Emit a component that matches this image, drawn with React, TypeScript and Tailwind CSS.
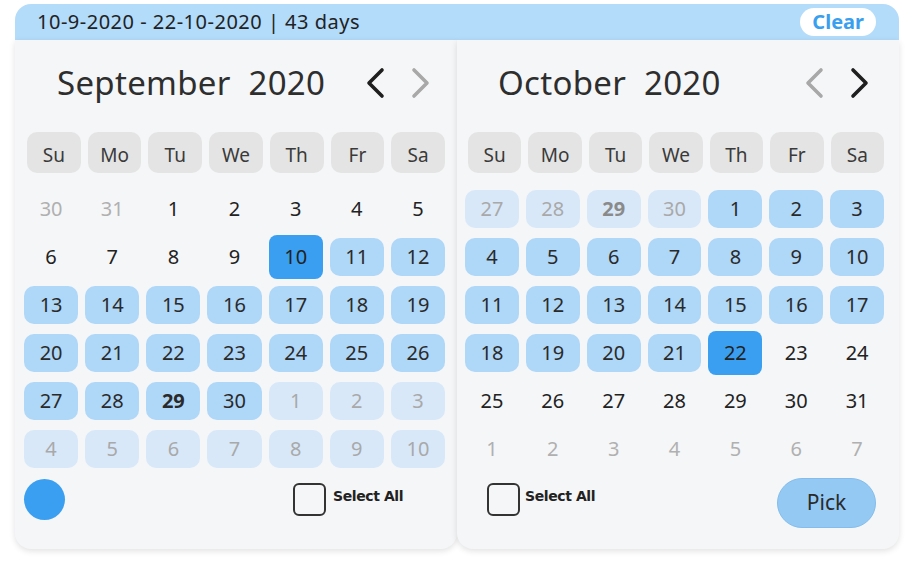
import React from "react";

type Day = { n: number; kind: "out" | "in" | "range" | "outRange" | "end"; bold?: boolean };

const WEEK = ["Su", "Mo", "Tu", "We", "Th", "Fr", "Sa"];

function septDays(): Day[] {
  const d: Day[] = [{ n: 30, kind: "out" }, { n: 31, kind: "out" }];
  for (let i = 1; i <= 30; i++) {
    d.push({ n: i, kind: i < 10 ? "in" : i === 10 ? "end" : "range", bold: i === 29 });
  }
  for (let i = 1; i <= 10; i++) d.push({ n: i, kind: "outRange" });
  return d;
}

function octDays(): Day[] {
  const d: Day[] = [27, 28, 29, 30].map((n) => ({ n, kind: "outRange" as const, bold: n === 29 }));
  for (let i = 1; i <= 31; i++) {
    d.push({ n: i, kind: i < 22 ? "range" : i === 22 ? "end" : "in" });
  }
  for (let i = 1; i <= 7; i++) d.push({ n: i, kind: "out" });
  return d;
}

function Chevron({ dir, dark }: { dir: "left" | "right"; dark: boolean }) {
  return (
    <svg width="22" height="32" viewBox="0 0 22 32" fill="none">
      <polyline
        points={dir === "left" ? "17,3 4,16 17,29" : "5,3 18,16 5,29"}
        stroke={dark ? "#1f1f1f" : "#a8a8a8"}
        strokeWidth="3.6"
        strokeLinecap="round"
        strokeLinejoin="round"
      />
    </svg>
  );
}

function DayCell({ d }: { d: Day }) {
  const base = "flex items-center justify-center text-[20px] leading-none";
  if (d.kind === "end")
    return <div className={`${base} h-[44px] -my-[3px] rounded-[8px] bg-[#3a9ff0] text-[#222]`}>{d.n}</div>;
  if (d.kind === "range")
    return (
      <div className={`${base} h-[38px] rounded-[10px] bg-[#afd7f8] text-[#2a2a2a] ${d.bold ? "font-bold" : ""}`}>
        {d.n}
      </div>
    );
  if (d.kind === "outRange")
    return (
      <div
        className={`${base} h-[38px] rounded-[10px] bg-[#d8e8f8] ${d.bold ? "font-bold text-[#8a8a8a]" : "text-[#a9a9a9]"}`}
      >
        {d.n}
      </div>
    );
  if (d.kind === "out") return <div className={`${base} h-[38px] text-[#b0b0b0]`}>{d.n}</div>;
  return <div className={`${base} h-[38px] text-[#222]`}>{d.n}</div>;
}

function Month({
  title,
  days,
  leftDark,
  side,
}: {
  title: string;
  days: Day[];
  leftDark: boolean;
  side: "left" | "right";
}) {
  return (
    <div
      className={`w-[442px] h-[509px] bg-[#f5f6f8] rounded-b-[16px] shadow-[0_2px_6px_rgba(0,0,0,0.12)] pt-[22px] ${
        side === "left" ? "pl-[9px] pr-[12px]" : "pl-[8px] pr-[15px]"
      }`}
    >
      <div className="flex items-center h-[42px] pl-[33px] pr-[14px]">
        <div className="text-[33px] text-[#2e2e2e] tracking-[0.3px] [word-spacing:9px]">{title}</div>
        <div className="ml-auto flex items-center gap-[22px]">
          <Chevron dir="left" dark={leftDark} />
          <Chevron dir="right" dark={!leftDark} />
        </div>
      </div>
      <div className="mt-[28px] grid grid-cols-7 gap-x-[7px] pl-[3px]">
        {WEEK.map((w) => (
          <div
            key={w}
            className="h-[41px] pt-[5px] rounded-[10px] bg-[#e4e4e4] flex items-center justify-center text-[19px] text-[#3a3a3a]"
          >
            {w}
          </div>
        ))}
      </div>
      <div className="mt-[17px] grid grid-cols-7 gap-x-[7px] gap-y-[10px] items-center">
        {days.map((d, i) => (
          <DayCell key={i} d={d} />
        ))}
      </div>
      {side === "left" ? (
        <div className="mt-[10px] flex items-start h-[50px]">
          <div className="w-[41px] h-[41px] mt-[1px] rounded-full bg-[#3a9ff0]" />
          <div className="ml-[228px] mt-[5px] flex items-start">
            <div className="w-[33px] h-[33px] rounded-[6px] border-2 border-[#333]" />
            <span className="ml-[7px] mt-[3px] text-[14px] font-bold text-[#222] font-['DejaVu_Sans',sans-serif] tracking-[-0.4px]">
              Select All
            </span>
          </div>
        </div>
      ) : (
        <div className="mt-[10px] flex items-start h-[50px]">
          <div className="ml-[22px] mt-[5px] flex items-start">
            <div className="w-[33px] h-[33px] rounded-[6px] border-2 border-[#333]" />
            <span className="ml-[5px] mt-[3px] text-[14px] font-bold text-[#222] font-['DejaVu_Sans',sans-serif] tracking-[-0.4px]">
              Select All
            </span>
          </div>
          <button className="ml-auto mr-[8px] w-[99px] h-[50px] rounded-full bg-[#94c9f4] border border-[#84bdeb] text-[21px] text-[#2a2a2a]">
            Pick
          </button>
        </div>
      )}
    </div>
  );
}

export default function App() {
  return (
    <div className="w-[922px] h-[561px] bg-white font-['Noto_Sans',sans-serif]">
      <div className="ml-[15px] pt-[4px] w-[884px]">
        <div className="h-[36px] rounded-t-[16px] bg-[#b3dbfa] flex items-center pl-[22px] pr-[23px]">
          <span className="text-[20px] text-[#222] leading-none tracking-[0.5px]">10-9-2020 - 22-10-2020 | 43 days</span>
          <button className="ml-auto h-[28px] px-[12px] rounded-full bg-white text-[20px] font-bold text-[#3a9fee] leading-none">
            Clear
          </button>
        </div>
        <div className="flex">
          <Month title="September 2020" days={septDays()} leftDark={true} side="left" />
          <Month title="October 2020" days={octDays()} leftDark={false} side="right" />
        </div>
      </div>
    </div>
  );
}
